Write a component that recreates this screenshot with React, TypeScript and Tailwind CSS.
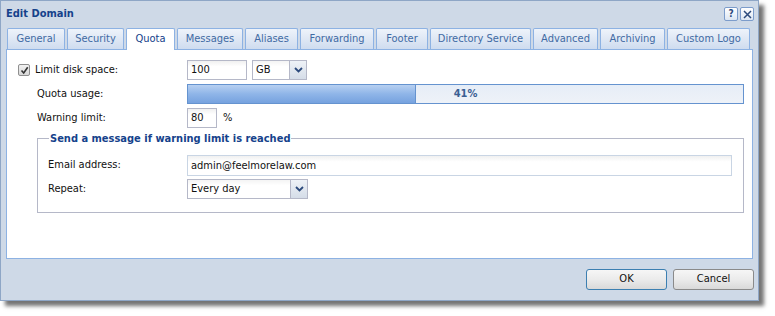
const tabs = [
  { label: "General", w: 58 },
  { label: "Security", w: 57 },
  { label: "Quota", w: 49, active: true },
  { label: "Messages", w: 66 },
  { label: "Aliases", w: 53 },
  { label: "Forwarding", w: 74 },
  { label: "Footer", w: 52 },
  { label: "Directory Service", w: 101 },
  { label: "Advanced", w: 65 },
  { label: "Archiving", w: 65 },
  { label: "Custom Logo", w: 83 },
];

function Chevron() {
  return (
    <svg width="9" height="6" viewBox="0 0 9 6">
      <path d="M1 1 L4.5 4.5 L8 1" fill="none" stroke="#2c4a7c" strokeWidth="1.8" />
    </svg>
  );
}

function Select({ value, width }: { value: string; width: string }) {
  return (
    <div className={`flex h-[20px] ${width} border border-[#b5b8c8] bg-white`}>
      <div className="flex-1 pl-[3px] leading-[18px] bg-gradient-to-b from-[#f4f4f4] to-white to-[30%]">{value}</div>
      <div className="flex w-[17px] items-center justify-center border-l border-[#b5b8c8] bg-gradient-to-b from-[#eef2f7] to-[#d5dde8]">
        <Chevron />
      </div>
    </div>
  );
}

function TextBox({ value, width, className = "" }: { value: string; width: string; className?: string }) {
  return (
    <div className={`h-[20px] ${width} border border-[#b5b8c8] bg-gradient-to-b from-[#f0f0f0] to-white to-[30%] pl-[3px] leading-[18px] ${className}`}>
      {value}
    </div>
  );
}

export default function App() {
  return (
    <div className="w-[775px] h-[316px] bg-white text-[11px] text-[#111]" style={{ fontFamily: 'Tahoma, "DejaVu Sans Condensed", "Liberation Sans", sans-serif' }}>
      <div className="flex h-[301px] w-[759px] flex-col border border-[#8ea6c6] bg-[#ced9e7] shadow-[5px_5px_4px_rgba(0,0,0,0.55)]">
        {/* Title bar */}
        <div className="flex h-[27px] items-center justify-between pl-[5px] pr-[4px]">
          <span className="font-bold text-[#15428b]">Edit Domain</span>
          <div className="flex gap-[2px] pb-[1px]">
            <div className="flex h-[14px] w-[14px] items-center justify-center rounded-[2px] border border-[#7c9ccb] bg-gradient-to-b from-white to-[#dce6f3] text-[10px] font-bold leading-none text-[#2c4a7c]">?</div>
            <div className="flex h-[14px] w-[14px] items-center justify-center rounded-[2px] border border-[#7c9ccb] bg-gradient-to-b from-white to-[#dce6f3]">
              <svg width="9" height="9" viewBox="0 0 9 9">
                <path d="M1 1 L8 8 M8 1 L1 8" stroke="#2c4a7c" strokeWidth="1.5" />
              </svg>
            </div>
          </div>
        </div>

        {/* Tabs */}
        <div className="flex h-[21px] gap-[2px] pl-[6px]">
          {tabs.map((t) => (
            <div
              key={t.label}
              style={{ width: t.w }}
              className={
                t.active
                  ? "relative z-10 flex h-[22px] items-center justify-center rounded-t-[2px] border border-b-0 border-[#8db2e3] bg-white text-[#15428b]"
                  : "flex h-[21px] items-center justify-center rounded-t-[2px] border border-b-0 border-[#8db2e3] bg-gradient-to-b from-[#eef3fa] to-[#cfdcef] text-[#416aa3]"
              }
            >
              {t.label}
            </div>
          ))}
        </div>

        {/* Panel */}
        <div className="ml-[5px] mr-[5px] h-[210px] border border-[#8db2e3] bg-white">
          <div className="flex flex-col pt-[10px]">
            <div className="flex h-[20px] items-center">
              <div className="ml-[11px] flex h-[12px] w-[12px] items-center justify-center rounded-[2px] border border-[#8f8f8f] bg-gradient-to-b from-[#f2f2f2] to-[#d8d8d8]">
                <svg width="9" height="9" viewBox="0 0 9 9">
                  <path d="M1.5 4.5 L3.7 7 L7.7 1.2" fill="none" stroke="#333" strokeWidth="1.6" />
                </svg>
              </div>
              <span className="ml-[5px] w-[152px]">Limit disk space:</span>
              <TextBox value="100" width="w-[60px]" />
              <div className="ml-[5px]">
                <Select value="GB" width="w-[55px]" />
              </div>
            </div>

            <div className="mt-[4px] flex h-[20px] items-center">
              <span className="ml-[30px] w-[150px]">Quota usage:</span>
              <div className="relative h-[20px] w-[557px] border border-[#6593cf] bg-gradient-to-b from-[#e6edf7] to-[#eef2f8]">
                <div className="h-full w-[41%] bg-gradient-to-b from-[#b7d0f1] via-[#8fb5e8] to-[#76a2df] border-r border-[#6593cf]" />
                <div className="absolute inset-0 flex items-center justify-center font-bold text-[#3a5f93]">41%</div>
              </div>
            </div>

            <div className="mt-[4px] flex h-[20px] items-center">
              <span className="ml-[30px] w-[150px]">Warning limit:</span>
              <TextBox value="80" width="w-[30px]" />
              <span className="ml-[6px]">%</span>
            </div>

            <fieldset className="ml-[30px] mt-[4px] w-[707px] border border-[#b5b8c8] pb-[13px] pl-[10px]">
              <legend className="ml-[1px] px-[1px] font-bold leading-[13px] text-[#15428b]">Send a message if warning limit is reached</legend>
              <div className="mt-[10px] flex h-[21px] items-center">
                <span className="w-[139px]">Email address:</span>
                <TextBox value="admin@feelmorelaw.com" width="w-[545px]" className="border-[#c9d5e4] !h-[21px] leading-[19px]" />
              </div>
              <div className="mt-[3px] flex h-[20px] items-center">
                <span className="w-[139px]">Repeat:</span>
                <Select value="Every day" width="w-[121px]" />
              </div>
            </fieldset>
          </div>
        </div>

        {/* Footer */}
        <div className="flex flex-1 items-start justify-end gap-[6px] pr-[4px] pt-[10px]">
          <button className="h-[21px] w-[81px] rounded-[3px] border border-[#3c7fb1] bg-gradient-to-b from-[#f6f6f6] via-[#ebebeb] to-[#d9d9d9] text-[#111]">OK</button>
          <button className="h-[21px] w-[81px] rounded-[3px] border border-[#8a8a8a] bg-gradient-to-b from-[#f6f6f6] via-[#ebebeb] to-[#d9d9d9] text-[#111]">Cancel</button>
        </div>
      </div>
    </div>
  );
}
